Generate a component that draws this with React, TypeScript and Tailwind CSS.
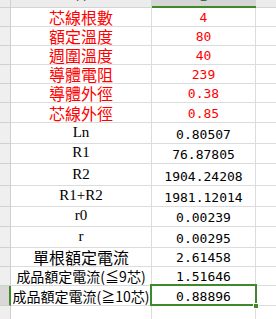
import React from 'react'

type Row = {
  label: string
  value: string
  labelCls: string
  valueCls: string
  selected?: boolean
}

const redCjk = "font-['Noto_Sans_CJK_TC',sans-serif] text-[16px] leading-[18px] text-[#ff0000]"
const serif = "font-['Liberation_Serif','Times_New_Roman',serif] text-[15px] leading-[17px] text-black pb-[2px]"
const cjk16 = "font-['Noto_Sans_CJK_TC',sans-serif] text-[16px] leading-[18px] text-black"
const cjk14 = "font-['Noto_Sans_CJK_TC',sans-serif] text-[14px] leading-[16px] text-black pb-[1px]"
const redNum = "font-['DejaVu_Sans_Mono',monospace] text-[13px] leading-[15px] text-[#ff0000] pb-[1px]"
const num = "font-['DejaVu_Sans_Mono',monospace] text-[13px] leading-[15px] text-black pb-[1px]"

const rows: Row[] = [
  { label: '芯線根數', value: '4', labelCls: redCjk, valueCls: redNum },
  { label: '額定溫度', value: '80', labelCls: redCjk, valueCls: redNum },
  { label: '週圍溫度', value: '40', labelCls: redCjk, valueCls: redNum },
  { label: '導體電阻', value: '239', labelCls: redCjk, valueCls: redNum },
  { label: '導體外徑', value: '0.38', labelCls: redCjk, valueCls: redNum },
  { label: '芯線外徑', value: '0.85', labelCls: redCjk, valueCls: redNum },
  { label: 'Ln', value: '0.80507', labelCls: serif, valueCls: num },
  { label: 'R1', value: '76.87805', labelCls: serif, valueCls: num },
  { label: 'R2', value: '1904.24208', labelCls: serif, valueCls: num },
  { label: 'R1+R2', value: '1981.12014', labelCls: serif, valueCls: num },
  { label: 'r0', value: '0.00239', labelCls: serif, valueCls: num },
  { label: 'r', value: '0.00295', labelCls: serif, valueCls: num },
  { label: '單根額定電流', value: '2.61458', labelCls: cjk16, valueCls: num },
  { label: '成品額定電流(≦9芯)', value: '1.51646', labelCls: cjk14, valueCls: num },
  { label: '成品額定電流(≧10芯)', value: '0.88896', labelCls: cjk14, valueCls: num, selected: true },
]

export default function App() {
  return (
    <div className="w-[276px] h-[319px] overflow-hidden bg-white">
      <div className="grid h-full grid-cols-[11px_141px_104px_1fr] grid-rows-[8px_19px_19px_19px_19px_19px_20px_21px_20px_22px_21px_20px_21px_19px_19px_20px_1fr]">
        {/* column headers */}
        <div className="bg-[#ececec] border-r border-b border-[#d0d0d0]" />
        <div className="bg-[#ececec] border-r border-b border-[#d4d4d4] overflow-hidden flex items-end justify-center">
          <span className="mb-[4px] font-['Liberation_Sans',sans-serif] text-[13px] leading-none text-[#555]">A</span>
        </div>
        <div className="bg-[#d6d6d6] border-b-2 border-[#3e8a2b] overflow-hidden flex items-end justify-center">
          <span className="mb-[3px] font-['Liberation_Sans',sans-serif] text-[13px] leading-none text-[#2f6f52]">B</span>
        </div>
        <div className="bg-[#ececec] border-b border-[#d4d4d4]" />

        {rows.map((r) => (
          <React.Fragment key={r.label}>
            <div
              className={
                r.selected
                  ? 'bg-[#d8d8d8] border-r-2 border-r-[#3e8a2b] border-b border-b-[#d0d0d0]'
                  : 'bg-[#efefef] border-r border-b border-[#d0d0d0]'
              }
            />
            <div className="border-r border-b border-[#dcdcdc] flex items-end justify-center whitespace-nowrap overflow-hidden">
              <span className={r.labelCls}>{r.label}</span>
            </div>
            <div className="relative border-r border-b border-[#dcdcdc] flex items-end justify-center">
              <span className={r.valueCls}>{r.value}</span>
              {r.selected && (
                <>
                  <div className="absolute -left-[2px] -top-[2px] -right-[2px] -bottom-[1px] border-2 border-[#3e8a2b]" />
                  <div className="absolute -right-[4px] -bottom-[4px] w-[6px] h-[6px] bg-[#3e8a2b] border border-white" />
                </>
              )}
            </div>
            <div className="border-b border-[#dcdcdc]" />
          </React.Fragment>
        ))}

        {/* trailing partial row */}
        <div className="bg-[#efefef] border-r border-[#d0d0d0]" />
        <div className="border-r border-[#dcdcdc]" />
        <div className="border-r border-[#dcdcdc]" />
        <div />
      </div>
    </div>
  )
}
